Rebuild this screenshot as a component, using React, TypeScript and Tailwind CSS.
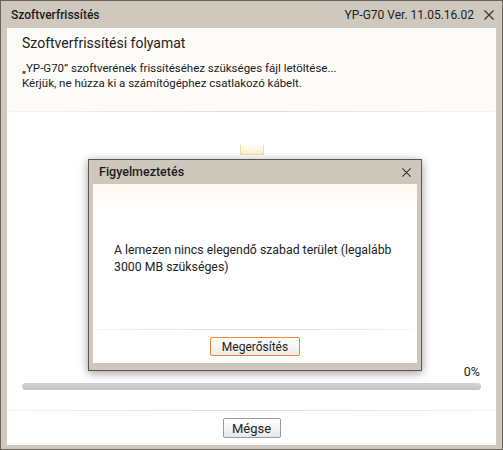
import React from 'react';

const font = { fontFamily: 'Roboto, "Liberation Sans", sans-serif' };

const CloseIcon = ({ className = '' }: { className?: string }) => (
  <svg viewBox="0 0 12 12" className={className} fill="none" stroke="currentColor" strokeWidth="1.2">
    <path d="M1.5 1.5l9 9M10.5 1.5l-9 9" />
  </svg>
);

const Fade = () => (
  <div className="h-px bg-gradient-to-r from-[#e4e2de]/40 via-[#dedcd8] to-[#e4e2de]/40" />
);

const WarningDialog = () => (
  <div className="absolute left-[87px] top-[158px] w-[334px] h-[212px] flex flex-col border border-[#5e564c] bg-[#cec7bc] shadow-[0_2px_9px_rgba(0,0,0,0.4)]">
    <div className="h-[24px] flex items-center justify-between pl-[10px] pr-[9px]">
      <span className="text-[12.5px] font-medium text-[#1c1c1c]">Figyelmeztetés</span>
      <CloseIcon className="w-[11px] h-[11px] text-[#333]" />
    </div>
    <div className="mx-[4px] mb-[7px] flex-1 flex flex-col bg-gradient-to-b from-[#fbf8f2] to-white to-[15%]">
      <div className="flex-1 flex items-center pl-[21px] pr-[10px] pt-[4px]">
        <p className="text-[12.3px] leading-[17px] text-[#222]">
          A lemezen nincs elegendő szabad terület (legalább
          <br />
          3000 MB szükséges)
        </p>
      </div>
      <div className="mx-[4px]">
        <Fade />
      </div>
      <div className="h-[33px] flex items-center justify-center">
        <button className="w-[90px] h-[19px] rounded-[2px] border border-[#e8883a] bg-gradient-to-b from-white to-[#ebebeb] text-[12px] leading-none text-[#222]">
          Megerősítés
        </button>
      </div>
    </div>
  </div>
);

export default function App() {
  return (
    <div style={font} className="relative w-[503px] h-[450px] flex flex-col bg-[#cfc8bd] border border-[#6b645a] text-[#222]">
      <div className="h-[27px] flex items-center justify-between pl-[10px] pr-[7px]">
        <span className="text-[12px] font-medium text-[#1c1c1c]">Szoftverfrissítés</span>
        <div className="flex items-center gap-[9px]">
          <span className="text-[12px] text-[#222]">YP-G70 Ver. 11.05.16.02</span>
          <CloseIcon className="w-[12px] h-[12px] text-[#333]" />
        </div>
      </div>
      <div className="mx-[6px] mb-[4px] flex-1 flex flex-col bg-white">
        <div className="h-[83px] bg-[#fcfbf8] pl-[15px] pt-[5px]">
          <h1 className="text-[14px] leading-[20px] text-[#222]">Szoftverfrissítési folyamat</h1>
          <p className="mt-[8px] text-[11.5px] leading-[15px] text-[#222]">
            „YP-G70” szoftverének frissítéséhez szükséges fájl letöltése...
            <br />
            Kérjük, ne húzza ki a számítógéphez csatlakozó kábelt.
          </p>
        </div>
        <Fade />
        <div className="flex-1 flex flex-col px-[15px]">
          <div className="mt-[33px] self-center w-[24px] h-[10px] border-x border-b border-[#f3dd9a] bg-gradient-to-b from-[#fffdf5] to-[#fdf0cf]" />
          <div className="flex-1" />
          <div className="text-right text-[12.5px] leading-[15px] pr-[1px]">0%</div>
          <div className="mt-[4px] h-[7px] rounded-full bg-gradient-to-b from-[#d2d2d2] to-[#c4c4c4]" />
          <div className="h-[20px]" />
        </div>
        <Fade />
        <div className="h-[34px] flex items-center justify-center">
          <button className="w-[58px] h-[20px] rounded-[2px] border border-[#9c9c9c] bg-gradient-to-b from-white to-[#e8e8e8] text-[13px] leading-none text-[#222]">
            Mégse
          </button>
        </div>
      </div>
      <WarningDialog />
    </div>
  );
}
